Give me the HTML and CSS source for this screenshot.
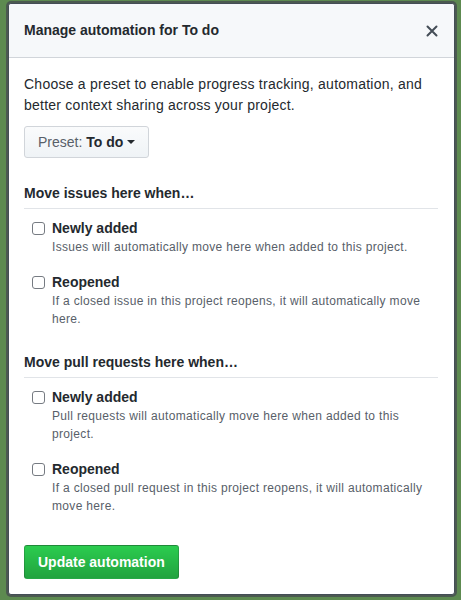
FILE: index.html
```html
<!DOCTYPE html>
<html>
<head>
<meta charset="utf-8">
<link rel="stylesheet" href="styles.css">
</head>
<body>
<div class="dialog">
  <div class="header">
    <h2 class="title">Manage automation for To do</h2>
    <button class="close" aria-label="Close">
      <svg width="12" height="12" viewBox="0 0 12 12"><path d="M1.5 1.5 L10.5 10.5 M10.5 1.5 L1.5 10.5" stroke="#444d56" stroke-width="2" stroke-linecap="round"/></svg>
    </button>
  </div>
  <div class="body">
    <p class="intro">Choose a preset to enable progress tracking, automation, and better context sharing across your project.</p>
    <button class="preset">Preset: <strong>To do</strong><span class="caret"></span></button>

    <h3 class="section-title first">Move issues here when…</h3>
    <div class="option">
      <span class="checkbox"></span>
      <div class="option-text">
        <div class="option-label">Newly added</div>
        <div class="option-desc">Issues will automatically move here when added to this project.</div>
      </div>
    </div>
    <div class="option">
      <span class="checkbox"></span>
      <div class="option-text">
        <div class="option-label">Reopened</div>
        <div class="option-desc">If a closed issue in this project reopens, it will automatically move here.</div>
      </div>
    </div>

    <h3 class="section-title">Move pull requests here when…</h3>
    <div class="option">
      <span class="checkbox"></span>
      <div class="option-text">
        <div class="option-label">Newly added</div>
        <div class="option-desc">Pull requests will automatically move here when added to this project.</div>
      </div>
    </div>
    <div class="option">
      <span class="checkbox"></span>
      <div class="option-text">
        <div class="option-label">Reopened</div>
        <div class="option-desc">If a closed pull request in this project reopens, it will automatically move here.</div>
      </div>
    </div>

    <button class="primary">Update automation</button>
  </div>
</div>
</body>
</html>
```
FILE: styles.css
```css
* { box-sizing: border-box; }
html, body { height: 100%; }
body {
  margin: 0;
  background: #5d8a50;
  padding: 3px 6px 0 8px;
  font-family: "Liberation Sans", Arial, sans-serif;
  color: #24292e;
  font-size: 14px;
}
.dialog {
  width: 447px;
  background: #fff;
  border: 1px solid #444d56;
  border-radius: 3px;
  box-shadow: 0 0 0 2px rgba(70, 72, 80, 0.75);
}
.header {
  display: flex;
  align-items: center;
  justify-content: space-between;
  background: #f6f8fa;
  border-bottom: 1px solid #d1d5da;
  padding: 16px 16px 16px 15px;
  border-radius: 3px 3px 0 0;
}
.title {
  margin: 0;
  font-size: 14px;
  line-height: 21px;
  font-weight: bold;
}
.close {
  border: 0;
  background: none;
  padding: 0;
  margin-right: 0;
  display: flex;
  width: 12px;
  height: 12px;
}
.body {
  padding: 16px 16px 15px 15px;
}
.intro {
  margin: 0 0 10px;
  line-height: 21px;
  letter-spacing: 0.24px;
}
.preset {
  height: 32px;
  padding: 0 13px;
  border: 1px solid #d1d5da;
  border-radius: 3px;
  background: linear-gradient(#fafbfc, #eff3f6);
  font-family: inherit;
  font-size: 14px;
  color: #586069;
  display: flex;
  align-items: center;
}
.preset strong { color: #24292e; margin-left: 4px; }
.caret {
  display: inline-block;
  width: 0; height: 0;
  border-left: 4px solid transparent;
  border-right: 4px solid transparent;
  border-top: 4px solid #24292e;
  margin-left: 4px;
}
.section-title {
  margin: 24px 0 9px;
  padding-bottom: 4px;
  border-bottom: 1px solid #e1e4e8;
  font-size: 14px;
  line-height: 21px;
  font-weight: bold;
}
.section-title.first { margin-top: 25px; }
.option {
  display: flex;
  padding-left: 8px;
  margin-bottom: 16px;
}
.checkbox {
  flex: none;
  width: 13px;
  height: 13px;
  border: 1px solid #767b82;
  border-radius: 3px;
  background: #fff;
  margin-top: 4px;
  margin-right: 7px;
}
.option-label {
  font-weight: bold;
  line-height: 20px;
}
.option-desc {
  font-size: 12px;
  line-height: 18px;
  color: #586069;
  letter-spacing: 0.33px;
}
.primary {
  margin-top: 14px;
  height: 34px;
  padding: 0 13px;
  border: 1px solid rgba(27, 31, 35, 0.2);
  border-radius: 3px;
  background: linear-gradient(#2bcc4f, #22a33f);
  color: #fff;
  font-family: inherit;
  font-size: 14px;
  font-weight: bold;
}
```
